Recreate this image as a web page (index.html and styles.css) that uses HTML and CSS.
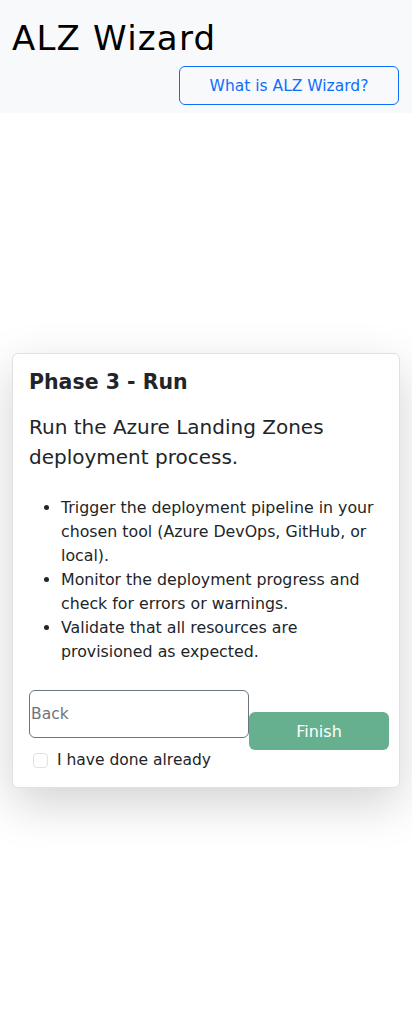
FILE: index.html
```html
<!DOCTYPE html>
<html>
<head>
<meta charset="utf-8">
<link rel="stylesheet" href="styles.css">
</head>
<body>
<header class="header">
  <h1 class="title">ALZ Wizard</h1>
  <div class="header-actions">
    <button class="btn-outline">What is ALZ Wizard?</button>
  </div>
</header>
<main class="main">
  <section class="card">
    <h5 class="card-title">Phase 3 - Run</h5>
    <p class="card-sub">Run the Azure Landing Zones deployment process.</p>
    <ul class="steps">
      <li>Trigger the deployment pipeline in your chosen tool (Azure DevOps, GitHub, or local).</li>
      <li>Monitor the deployment progress and check for errors or warnings.</li>
      <li>Validate that all resources are provisioned as expected.</li>
    </ul>
    <div class="actions">
      <input class="back-input" type="text" placeholder="Back">
      <button class="btn-finish">Finish</button>
    </div>
    <label class="check">
      <span class="box"></span>
      <span>I have done already</span>
    </label>
  </section>
</main>
</body>
</html>
```
FILE: styles.css
```css
* { box-sizing: border-box; }
html, body { margin: 0; padding: 0; }
body {
  font-family: "DejaVu Sans", sans-serif;
  color: #212529;
  background: #fff;
  min-height: 1028px;
  display: flex;
  flex-direction: column;
}
.header {
  background: #f8f9fa;
  padding: 16px 12px 8px 12px;
  height: 113px;
}
.title {
  margin: 0;
  font-weight: 400;
  font-size: 34px;
  line-height: 44px;
  letter-spacing: 1.2px;
  color: #000;
  font-family: "DejaVu Sans", sans-serif;
}
.header-actions {
  display: flex;
  justify-content: flex-end;
  margin-top: 6px;
  padding-right: 1px;
}
.btn-outline {
  width: 220px;
  height: 39px;
  border: 1px solid #0d6efd;
  border-radius: 6px;
  background: transparent;
  color: #0d6efd;
  font-family: "DejaVu Sans", sans-serif;
  font-size: 15.5px;
}
.main {
  flex: 1;
  display: flex;
  align-items: center;
  padding: 0 12px 0 12px;
}
.card {
  width: 388px;
  border: 1px solid #dee2e6;
  border-radius: 6px;
  background: #fff;
  box-shadow: 0 16px 48px rgba(0,0,0,0.175);
  padding: 16px 10px 17px 16px;
}
.card-title {
  margin: 0 0 17px 0;
  font-size: 20.5px;
  font-weight: 700;
  line-height: 25px;
}
.card-sub {
  margin: 0 0 24px 0;
  font-size: 20px;
  font-weight: 500;
  line-height: 30px;
  padding-right: 6px;
}
.steps {
  margin: 0 0 26px 0;
  padding-left: 32px;
  padding-right: 6px;
  font-size: 15.8px;
  line-height: 24px;
  font-weight: 400;
}
.actions {
  display: flex;
  align-items: flex-start;
}
.back-input {
  flex-shrink: 0;
  width: 220px;
  height: 48px;
  border: 1px solid #6c757d;
  border-radius: 6px;
  padding: 0 0 0 1px;
  font-family: "DejaVu Sans", sans-serif;
  font-size: 15.5px;
  color: #212529;
  background: #fff;
}
.back-input::placeholder { color: #6c757d; }
.btn-finish {
  flex-shrink: 0;
  margin-top: 22px;
  width: 140px;
  height: 38px;
  border: 0;
  border-radius: 6px;
  background: #67b08f;
  color: #fff;
  font-family: "DejaVu Sans", sans-serif;
  font-size: 16px;
}
.check {
  display: flex;
  align-items: center;
  gap: 9px;
  margin-left: 4px;
  font-size: 15.5px;
  line-height: 20px;
}
.box {
  width: 15px;
  height: 15px;
  border: 1px solid #dee2e6;
  border-radius: 4px;
  background: #fff;
}
```
